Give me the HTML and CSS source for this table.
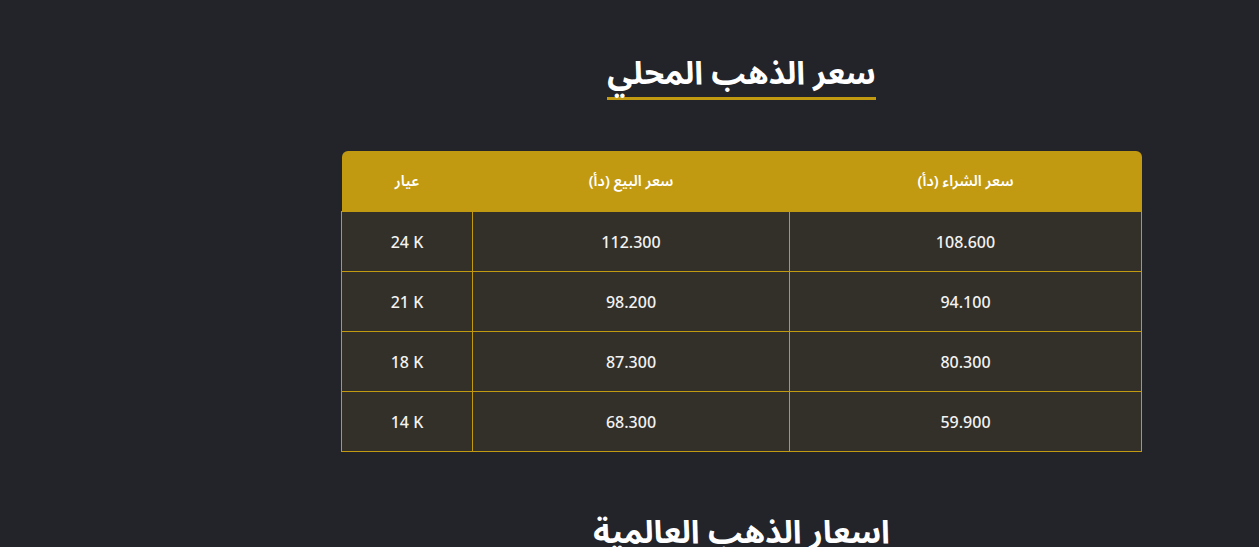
FILE: index.html
```html
<!DOCTYPE html>
<html lang="ar" dir="rtl">
<head>
<meta charset="utf-8">
<title>سعر الذهب المحلي</title>
<link rel="stylesheet" href="styles.css">
</head>
<body>
<main class="page">
  <section class="section">
    <h2 class="section-title">سعر الذهب المحلي</h2>
    <table class="price-table">
      <thead>
        <tr>
          <th class="col-buy">سعر الشراء (دأ)</th>
          <th class="col-sell">سعر البيع (دأ)</th>
          <th class="col-karat">عيار</th>
        </tr>
      </thead>
      <tbody>
        <tr><td>108.600</td><td>112.300</td><td dir="ltr">24 K</td></tr>
        <tr><td>94.100</td><td>98.200</td><td dir="ltr">21 K</td></tr>
        <tr><td>80.300</td><td>87.300</td><td dir="ltr">18 K</td></tr>
        <tr><td>59.900</td><td>68.300</td><td dir="ltr">14 K</td></tr>
      </tbody>
    </table>
  </section>
  <section class="section section-next">
    <h2 class="section-title">اسعار الذهب العالمية</h2>
  </section>
</main>
</body>
</html>
```
FILE: styles.css
```css
html, body {
  margin: 0;
  padding: 0;
  background: #232429;
}
body {
  font-family: "Noto Sans", "Noto Sans Arabic", "DejaVu Sans", sans-serif;
  color: #ffffff;
  overflow: hidden;
  height: 547px;
}
.page {
  margin-left: 224px;
  display: flex;
  flex-direction: column;
  align-items: center;
}
.section {
  display: flex;
  flex-direction: column;
  align-items: center;
  padding-top: 51px;
}
.section-next {
  padding-top: 58px;
}
.section-title {
  margin: 0;
  font-size: 32px;
  font-weight: 700;
  line-height: 42px;
  padding-bottom: 4px;
  border-bottom: 3px solid #c19a11;
  color: #ffffff;
}
.price-table {
  margin-top: 51px;
  width: 800px;
  border-collapse: collapse;
  table-layout: fixed;
}
.price-table th {
  background: #c19a11;
  color: #ffffff;
  font-size: 15px;
  font-weight: 600;
  height: 60px;
  padding: 0;
  text-align: center;
}
.price-table th:first-child {
  border-top-right-radius: 6px;
}
.price-table th:last-child {
  border-top-left-radius: 6px;
}
.col-buy { width: 352px; }
.col-sell { width: 317px; }
.col-karat { width: 131px; }
.price-table td {
  background: #333029;
  border: 1px solid #c19a11;
  color: #f2f2f2;
  font-size: 16px;
  font-weight: 500;
  height: 59px;
  padding: 0;
  text-align: center;
}
```
